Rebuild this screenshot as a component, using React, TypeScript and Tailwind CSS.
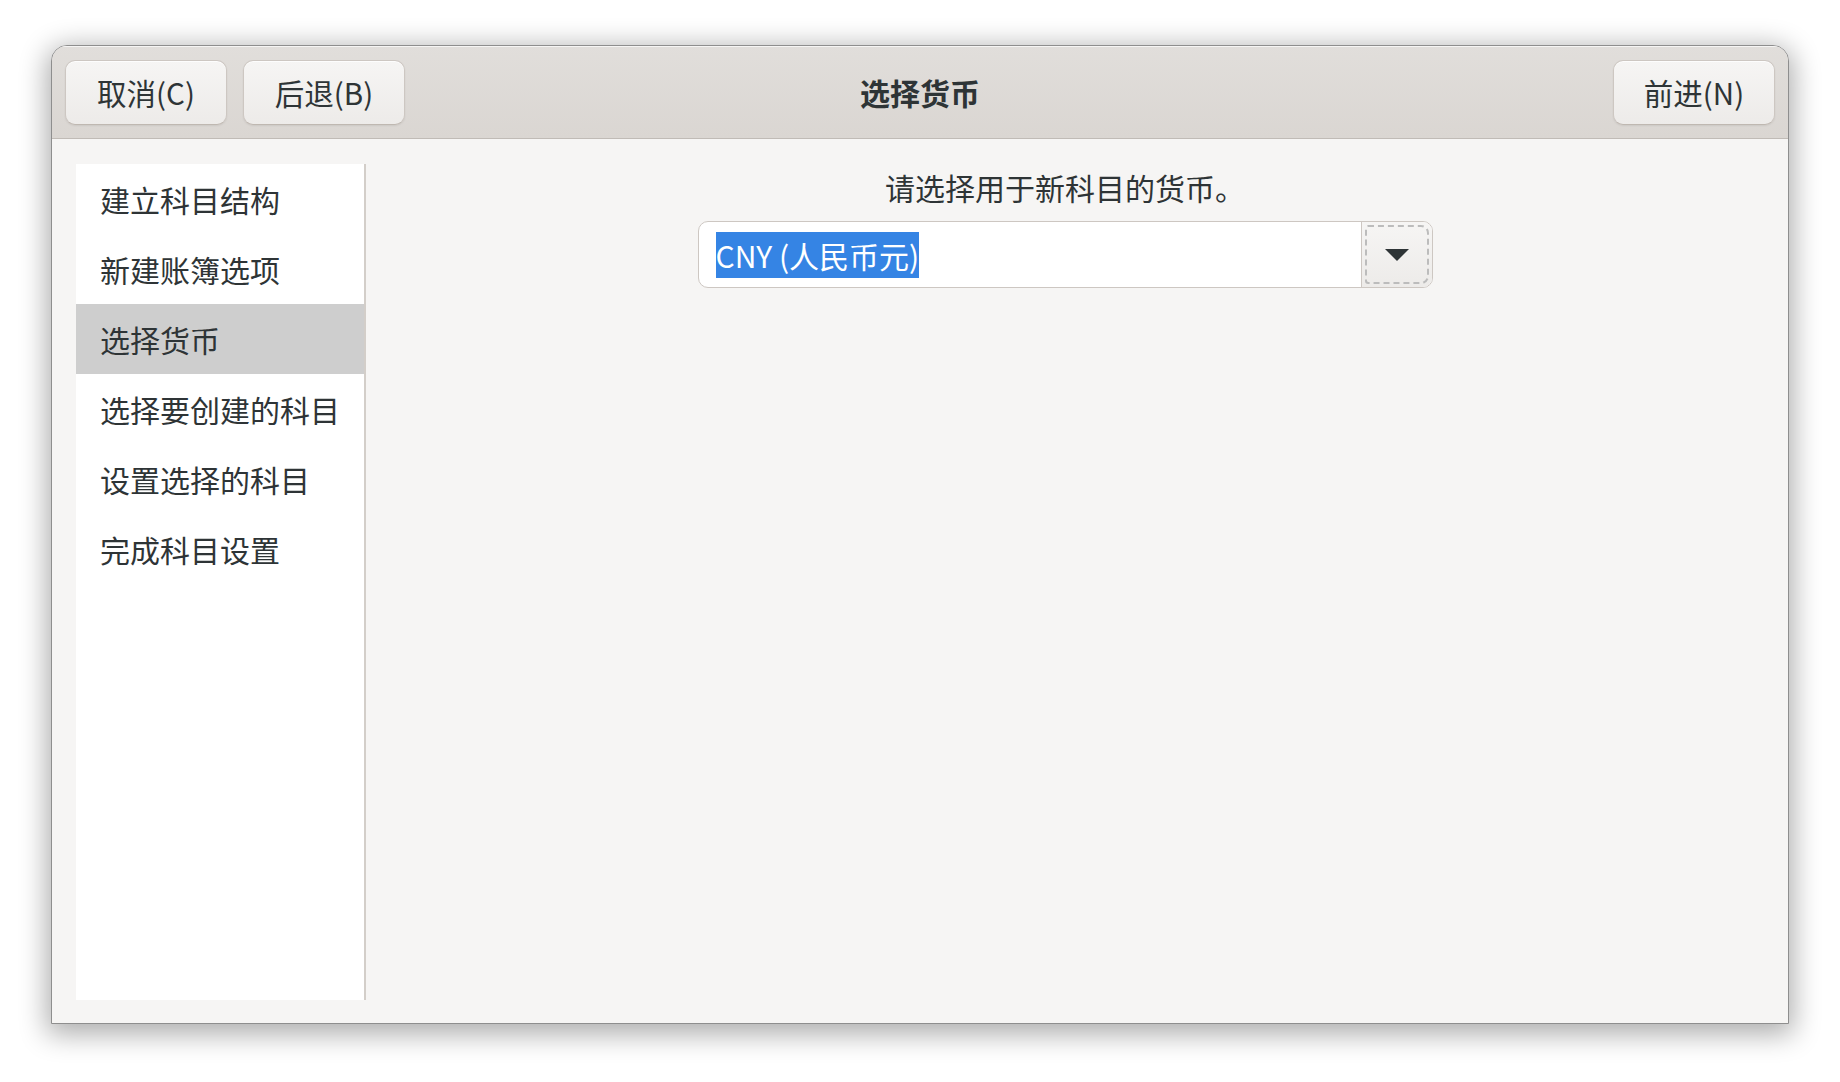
import React from "react";

const steps = [
  "建立科目结构",
  "新建账簿选项",
  "选择货币",
  "选择要创建的科目",
  "设置选择的科目",
  "完成科目设置",
];

function HeaderButton({ label }: { label: string }) {
  return (
    <button className="w-[162px] h-[65px] rounded-[10px] border border-[#cdc7c2] border-b-[#bfb8b1] bg-gradient-to-b from-[#f6f5f4] to-[#edebe9] shadow-[inset_0_1px_0_rgba(255,255,255,0.8),0_1px_2px_rgba(0,0,0,0.07)] text-[29.5px] leading-[34px] text-[#2e3436] flex items-center justify-center">
      {label}
    </button>
  );
}

export default function App() {
  return (
    <div className="w-[1840px] h-[1082px] bg-white pt-[45px] pl-[51px] font-['Noto_Sans_CJK_SC','Noto_Sans',sans-serif] text-[#2e3436]">
      <div className="w-[1738px] h-[979px] flex flex-col border border-[#8e8e8e] rounded-t-[16px] bg-[#f6f5f4] shadow-[0_6px_28px_4px_rgba(0,0,0,0.33)] overflow-hidden">
        {/* Header bar */}
        <div className="h-[93px] shrink-0 border-b border-[#c0bbb6] bg-gradient-to-b from-[#e1dedb] to-[#dad6d2] shadow-[inset_0_1px_0_rgba(255,255,255,0.7)] grid grid-cols-[1fr_auto_1fr] items-center px-[13px]">
          <div className="flex gap-[16px]">
            <HeaderButton label="取消(C)" />
            <HeaderButton label="后退(B)" />
          </div>
          <div className="text-[30px] leading-[34px] font-bold">选择货币</div>
          <div className="flex justify-end">
            <HeaderButton label="前进(N)" />
          </div>
        </div>

        {/* Body */}
        <div className="flex-1 flex pt-[25px] pb-[23px] px-[24px]">
          <div className="w-[290px] bg-white border-r-2 border-[#d3cec9] flex flex-col">
            {steps.map((s, i) => (
              <div
                key={s}
                className={
                  i === 2
                    ? "h-[70px] pl-[24px] flex items-center bg-[#cecece] text-[30px] leading-[34px]"
                    : "h-[70px] pl-[24px] flex items-center text-[30px] leading-[34px]"
                }
              >
                {s}
              </div>
            ))}
          </div>

          <div className="flex-1 flex flex-col items-center pt-[6px]">
            <div className="text-[30px] leading-[34px]">请选择用于新科目的货币。</div>
            <div className="mt-[17px] w-[735px] h-[67px] flex rounded-[10px] border border-[#cdc7c2] bg-white overflow-hidden">
              <div className="flex-1 flex items-center pl-[17px]">
                <span className="bg-[#3584e4] text-white text-[30px] leading-[46px]">CNY (人民币元)</span>
              </div>
              <div className="w-[71px] border-l border-[#cdc7c2] bg-gradient-to-b from-[#f6f5f4] to-[#edebe9] p-[3px]">
                <div className="w-full h-full border-2 border-dashed border-[#bcbcbc] rounded-l-[3px] rounded-r-[8px] flex items-center justify-center">
                  <svg width="24" height="12" viewBox="0 0 24 12">
                    <path d="M0 0 L24 0 L12 12 Z" fill="#2e3436" />
                  </svg>
                </div>
              </div>
            </div>
          </div>
        </div>
      </div>
    </div>
  );
}
